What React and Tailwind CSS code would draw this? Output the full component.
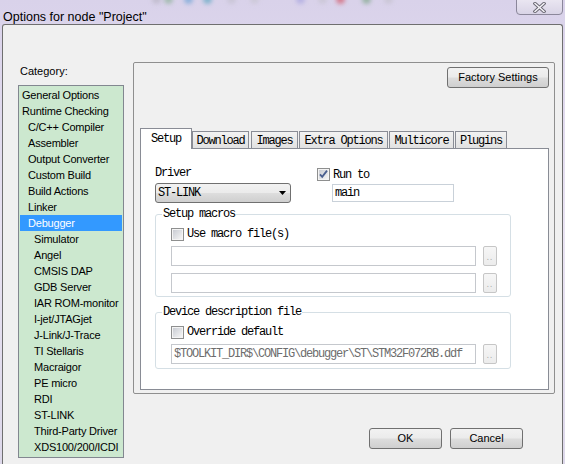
import React from 'react';

// --- Fonts ---
const ui = "font-['Liberation_Sans',Arial,sans-serif]";
const mono = "font-['Liberation_Mono','DejaVu_Sans_Mono',monospace] text-[12px] tracking-[-1.2px]";

const CATEGORIES = [
  { label: 'General Options', level: 1 },
  { label: 'Runtime Checking', level: 1 },
  { label: 'C/C++ Compiler', level: 2 },
  { label: 'Assembler', level: 2 },
  { label: 'Output Converter', level: 2 },
  { label: 'Custom Build', level: 2 },
  { label: 'Build Actions', level: 2 },
  { label: 'Linker', level: 2 },
  { label: 'Debugger', level: 2, selected: true },
  { label: 'Simulator', level: 3 },
  { label: 'Angel', level: 3 },
  { label: 'CMSIS DAP', level: 3 },
  { label: 'GDB Server', level: 3 },
  { label: 'IAR ROM-monitor', level: 3 },
  { label: 'I-jet/JTAGjet', level: 3 },
  { label: 'J-Link/J-Trace', level: 3 },
  { label: 'TI Stellaris', level: 3 },
  { label: 'Macraigor', level: 3 },
  { label: 'PE micro', level: 3 },
  { label: 'RDI', level: 3 },
  { label: 'ST-LINK', level: 3 },
  { label: 'Third-Party Driver', level: 3 },
  { label: 'XDS100/200/ICDI', level: 3 },
];

const TABS = [
  { label: 'Setup', w: 'w-[52px]', ml: 'ml-0', active: true },
  { label: 'Download', w: 'w-[57px]', ml: 'ml-0' },
  { label: 'Images', w: 'w-[47px]', ml: 'ml-[2px]' },
  { label: 'Extra Options', w: 'w-[89px]', ml: 'ml-[1px]' },
  { label: 'Multicore', w: 'w-[65px]', ml: 'ml-[1px]' },
  { label: 'Plugins', w: 'w-[52px]', ml: 'ml-[1px]' },
];

// blurred taskbar icons showing through the glass title bar
const GLASS_DOTS = [
  { left: 'left-[152px]', bg: 'bg-[#b9b6c4]' },
  { left: 'left-[164px]', bg: 'bg-[#8fb39a]' },
  { left: 'left-[184px]', bg: 'bg-[#6fa4d6]' },
  { left: 'left-[203px]', bg: 'bg-[#5fa8c2]' },
  { left: 'left-[227px]', bg: 'bg-[#c4c1cf]' },
  { left: 'left-[250px]', bg: 'bg-[#c9c6d2]' },
  { left: 'left-[296px]', bg: 'bg-[#a9a6e0]' },
  { left: 'left-[318px]', bg: 'bg-[#c7c4d0]' },
  { left: 'left-[336px]', bg: 'bg-[#d45a6a]' },
  { left: 'left-[362px]', bg: 'bg-[#7fa88a]' },
  { left: 'left-[384px]', bg: 'bg-[#c5c2ce]' },
];

const CheckBox = ({ checked }) => (
  <svg width="13" height="13" viewBox="0 0 13 13" className="shrink-0">
    <defs>
      <linearGradient id={checked ? 'cbOn' : 'cbOff'} x1="0" y1="0" x2="1" y2="1">
        <stop offset="0" stopColor="#c9ccd3" />
        <stop offset="1" stopColor="#f5f5f5" />
      </linearGradient>
    </defs>
    <rect x="0.5" y="0.5" width="12" height="12" fill="#f4f4f4" stroke="#8e8f8f" />
    <rect x="2" y="2" width="9" height="9" fill={`url(#${checked ? 'cbOn' : 'cbOff'})`} />
    {checked && (
      <path d="M3 6.3 L5.2 8.8 L10 2.6" fill="none" stroke="#4a5f8f" strokeWidth="1.8" />
    )}
  </svg>
);

const BrowseButton = () => (
  <div className="ml-[7px] w-[14px] h-[20px] rounded-[2px] border border-[#c6c6c6] bg-gradient-to-b from-[#f6f6f6] to-[#ececec] flex items-end justify-center pb-[4px]">
    <span className="text-[8px] leading-[8px] text-[#a3a3a3] tracking-[1px]">..</span>
  </div>
);

const PathField = ({ value, disabled }) => (
  <div className="flex items-center">
    <div className={`w-[305px] h-[20px] border border-[#c5c8cd] bg-white px-[2px] leading-[18px] whitespace-nowrap overflow-hidden ${mono} ${disabled ? 'text-[#6d6d6d]' : 'text-black'}`}>
      {value}
    </div>
    <BrowseButton />
  </div>
);

const Group = ({ title, className = '', children }) => (
  <fieldset className={`w-[356px] border border-[#d5dfe5] rounded-[3px] ${className}`}>
    <legend className={`ml-[6px] px-[1px] h-[14px] leading-[14px] ${mono}`}>{title}</legend>
    <div className="pl-[15px]">{children}</div>
  </fieldset>
);

const PushButton = ({ children, className = '' }) => (
  <div className={`h-[21px] rounded-[3px] border border-[#707070] bg-[linear-gradient(#f2f2f2_0%,#ebebeb_48%,#dddddd_52%,#cfcfcf_100%)] flex items-center justify-center text-[11px] text-black ${ui} ${className}`}>
    {children}
  </div>
);

export default function App() {
  return (
    <div className="relative w-[565px] h-[464px] overflow-hidden bg-gradient-to-b from-[#d9d2ea] via-[#e9e3f2] to-[#ddd8ea]">
      {GLASS_DOTS.map((d, i) => (
        <div key={i} className={`absolute -top-[5px] ${d.left} w-[9px] h-[9px] rounded-full blur-[2px] opacity-70 ${d.bg}`} />
      ))}

      {/* Title bar */}
      <div className="relative h-[24px] pl-[3px] pt-[3px]">
        <span className={`text-[12.5px] leading-[14px] text-black ${ui}`}>Options for node "Project"</span>
        <div className="absolute right-[2px] -top-[2px] w-[47px] h-[17px] rounded-b-[4px] border border-[#8b879a] bg-gradient-to-b from-[#ebe7f2] to-[#d9d4e6] flex items-center justify-center pt-[2px]">
          <svg width="13" height="11" viewBox="0 0 13 11">
            <path d="M2 1.5 L11 9.5 M11 1.5 L2 9.5" stroke="#6c6a75" strokeWidth="3.4" strokeLinecap="square" />
            <path d="M2 1.5 L11 9.5 M11 1.5 L2 9.5" stroke="#f7f6fa" strokeWidth="1.4" strokeLinecap="square" />
          </svg>
        </div>
      </div>

      {/* Dialog client area */}
      <div className="ml-[2px] w-[561px] h-[450px] border-t border-l border-r border-[#6f6f6f] rounded-t-[3px] bg-[#f0f0f0] flex items-start">
        {/* Category list */}
        <div className="ml-[15px] mt-[40px]">
          <div className={`pl-[2px] h-[13px] leading-[13px] text-[11px] text-black ${ui}`}>Category:</div>
          <div className="mt-[7px] w-[106px] h-[373px] border border-[#828790] bg-[#cce8cf] pt-[1px]">
            {CATEGORIES.map((c) => (
              <div
                key={c.label}
                className={`mx-[1px] h-[16px] leading-[16px] text-[11px] tracking-[-0.2px] whitespace-nowrap ${ui} ${
                  c.level === 1 ? 'pl-[2px]' : c.level === 2 ? 'pl-[8px]' : 'pl-[14px]'
                } ${c.selected ? 'bg-[#3399ff] text-white' : 'text-black'}`}
              >
                {c.label}
              </div>
            ))}
          </div>
        </div>

        <div className="ml-[9px] mt-[37px] flex flex-col">
          {/* Options group */}
          <div className="w-[422px] h-[332px] border border-[#8f8f8f] rounded-[2px] flex flex-col">
            <PushButton className="self-end mr-[5px] mt-[4px] w-[102px]">Factory Settings</PushButton>

            {/* Tabs */}
            <div className="relative z-10 ml-[6px] mt-[40px] h-[20px] flex items-end">
              {TABS.map((t) =>
                t.active ? (
                  <div
                    key={t.label}
                    className={`${t.w} ${t.ml} h-[21px] -mb-[1px] border border-b-0 border-[#898c95] bg-white text-center pt-[3px] leading-[14px] ${mono}`}
                  >
                    {t.label}
                  </div>
                ) : (
                  <div
                    key={t.label}
                    className={`${t.w} ${t.ml} h-[17px] border border-b-0 border-[#898c95] bg-gradient-to-b from-[#f2f2f2] to-[#e1e1e1] text-center pt-[2px] leading-[14px] ${mono}`}
                  >
                    {t.label}
                  </div>
                )
              )}
            </div>

            {/* Setup page */}
            <div className="ml-[6px] w-[409px] h-[242px] border border-[#898c95] bg-white pl-[14px]">
              <div className="flex items-start">
                <div className="mt-[17px]">
                  <div className={`h-[14px] leading-[14px] ${mono}`}>Driver</div>
                  <div className="mt-[3px] w-[136px] h-[20px] rounded-[3px] border border-[#707070] bg-[linear-gradient(#f2f2f2_0%,#ebebeb_48%,#dddddd_52%,#cfcfcf_100%)] flex items-center pl-[2px] pr-[4px]">
                    <span className={`flex-1 leading-[14px] ${mono}`}>ST-LINK</span>
                    <svg width="7" height="4" viewBox="0 0 7 4">
                      <path d="M0 0 H7 L3.5 4 Z" fill="#000" />
                    </svg>
                  </div>
                </div>
                <div className="ml-[26px] mt-[19px]">
                  <div className="flex items-center h-[13px]">
                    <CheckBox checked />
                    <span className={`ml-[3px] leading-[14px] ${mono}`}>Run to</span>
                  </div>
                  <div className={`mt-[3px] ml-[15px] w-[122px] h-[18px] border border-[#c9d1d9] bg-white pl-[2px] leading-[16px] ${mono}`}>
                    main
                  </div>
                </div>
              </div>

              <Group title="Setup macros" className="mt-[4px] pb-[3px]">
                <div className="mt-[6px] flex items-center h-[14px]">
                  <CheckBox />
                  <span className={`ml-[3px] leading-[14px] ${mono}`}>Use macro file(s)</span>
                </div>
                <div className="mt-[5px]">
                  <PathField value="" />
                </div>
                <div className="mt-[7px]">
                  <PathField value="" />
                </div>
              </Group>

              <Group title="Device description file" className="mt-[8px] pb-[4px]">
                <div className="mt-[6px] flex items-center h-[14px]">
                  <CheckBox />
                  <span className={`ml-[3px] leading-[14px] ${mono}`}>Override default</span>
                </div>
                <div className="mt-[5px]">
                  <PathField value="$TOOLKIT_DIR$\CONFIG\debugger\ST\STM32F072RB.ddf" disabled />
                </div>
              </Group>
            </div>
          </div>

          {/* Dialog buttons */}
          <div className="mt-[34px] ml-[236px] flex gap-[8px]">
            <PushButton className="w-[73px]">OK</PushButton>
            <PushButton className="w-[73px]">Cancel</PushButton>
          </div>
        </div>
      </div>
    </div>
  );
}
